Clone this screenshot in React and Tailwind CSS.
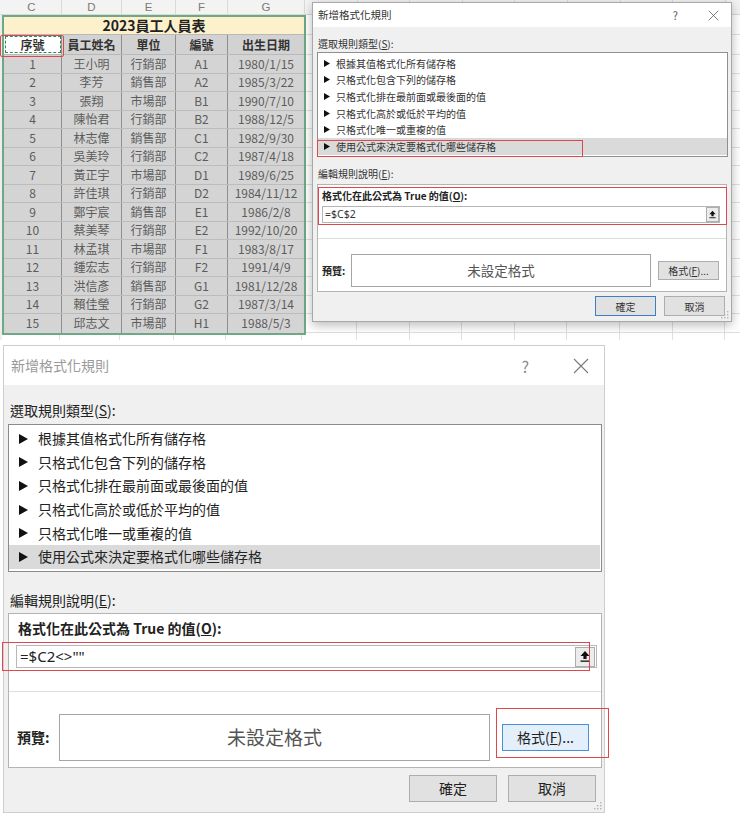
import React from 'react';

const employees = [
    [1, '王小明', '行銷部', 'A1', '1980/1/15'],
    [2, '李芳', '銷售部', 'A2', '1985/3/22'],
    [3, '張翔', '市場部', 'B1', '1990/7/10'],
    [4, '陳怡君', '行銷部', 'B2', '1988/12/5'],
    [5, '林志偉', '銷售部', 'C1', '1982/9/30'],
    [6, '吳美玲', '行銷部', 'C2', '1987/4/18'],
    [7, '黃正宇', '市場部', 'D1', '1989/6/25'],
    [8, '許佳琪', '行銷部', 'D2', '1984/11/12'],
    [9, '鄭宇宸', '銷售部', 'E1', '1986/2/8'],
    [10, '蔡美琴', '行銷部', 'E2', '1992/10/20'],
    [11, '林孟琪', '市場部', 'F1', '1983/8/17'],
    [12, '鍾宏志', '行銷部', 'F2', '1991/4/9'],
    [13, '洪信彥', '銷售部', 'G1', '1981/12/28'],
    [14, '賴佳瑩', '行銷部', 'G2', '1987/3/14'],
    [15, '邱志文', '市場部', 'H1', '1988/5/3'],
];

const cellWidths = ['w-[58px]', 'w-[60px]', 'w-[54px]', 'w-[52px]', 'w-[76px]'];
const letterWidths = ['w-[60px]', 'w-[60px]', 'w-[54px]', 'w-[52px]', 'w-[77px]'];
const headers = ['序號', '員工姓名', '單位', '編號', '出生日期'];
const rules = [
    '根據其值格式化所有儲存格',
    '只格式化包含下列的儲存格',
    '只格式化排在最前面或最後面的值',
    '只格式化高於或低於平均的值',
    '只格式化唯一或重複的值',
    '使用公式來決定要格式化哪些儲存格',
];
const blankCols = Array.from({ length: 9 });
const rightRowHeights = ['h-[20px]', 'h-[20px]', ...Array.from({ length: 16 }, () => 'h-[18.5px]')];

function Tri({ small }) {
    return small ? (
        <svg width="6" height="7" viewBox="0 0 6 7" className="shrink-0"><path d="M0 0 L6 3.5 L0 7 Z" fill="#111" /></svg>
    ) : (
        <svg width="9" height="10" viewBox="0 0 9 10" className="shrink-0"><path d="M0 0 L9 5 L0 10 Z" fill="#111" /></svg>
    );
}

function XIcon({ size, color }) {
    return (
        <svg width={size} height={size} viewBox="0 0 16 16">
            <path d="M1 1 L15 15 M15 1 L1 15" stroke={color} strokeWidth="1.1" fill="none" />
        </svg>
    );
}

function UploadIcon({ w, h }) {
    return (
        <svg width={w} height={h} viewBox="0 0 10 12">
            <path d="M5 0.5 L9.5 5.5 H6.6 V8.6 H3.4 V5.5 H0.5 Z" fill="#111" />
            <rect x="0.5" y="10" width="9" height="1.3" fill="#111" />
        </svg>
    );
}

function Grip() {
    return (
        <svg width="9" height="9" viewBox="0 0 9 9" className="absolute bottom-[2px] right-[2px]">
            <g fill="#b5b5b5">
                <rect x="7" y="1" width="1.4" height="1.4" />
                <rect x="4" y="4" width="1.4" height="1.4" />
                <rect x="7" y="4" width="1.4" height="1.4" />
                <rect x="1" y="7" width="1.4" height="1.4" />
                <rect x="4" y="7" width="1.4" height="1.4" />
                <rect x="7" y="7" width="1.4" height="1.4" />
            </g>
        </svg>
    );
}

function Sheet() {
    return (
        <div className="relative h-[340px] overflow-hidden bg-white">
            {/* column letters */}
            <div className="flex h-[15px] border-b border-[#d8d8d8] bg-[#f3f3f3] font-['Liberation_Sans',sans-serif] text-[11.5px] leading-[14px] text-[#7a7a7a]">
                <div className="w-[2px] shrink-0" />
                {['C', 'D', 'E', 'F', 'G'].map((c, i) => (
                    <div key={c} className={`${letterWidths[i]} shrink-0 border-r border-[#dadada] text-center`}>{c}</div>
                ))}
                {blankCols.map((_, i) => (
                    <div key={i} className="w-[52.6px] shrink-0 border-r border-[#dadada]" />
                ))}
            </div>

            <div className="flex">
                <div className="h-[330px] w-[2px] shrink-0 bg-[#eeeeee]" />
                <div className="w-[304px] shrink-0">
                    <div className="border-2 border-[#6ea886]">
                        <div className="flex h-[18px] items-center justify-center border-b border-[#b9b9b9] bg-[#fdf1cc] text-[14px] font-bold text-[#222]">
                            2023員工人員表
                        </div>
                        <div className="flex h-[20px] border-b border-[#b9b9b9] text-[12px] font-bold text-[#333]">
                            {headers.map((h, i) => (
                                <div
                                    key={h}
                                    className={`${cellWidths[i]} flex shrink-0 items-center justify-center ${i < 4 ? 'border-r border-r-[#8f8f8f]' : ''} ${i === 0 ? 'bg-white outline-1 -outline-offset-2 outline-dashed outline-[#2e8b57]' : 'bg-[#d2d2d2]'}`}
                                >
                                    {h}
                                </div>
                            ))}
                        </div>
                        {employees.map((row, r) => (
                            <div key={row[0]} className={`flex h-[18.5px] text-[12px] text-[#5c5c5c] ${r < 14 ? 'border-b border-[#bcbcbc]' : ''}`}>
                                {row.map((v, i) => (
                                    <div
                                        key={i}
                                        className={`${cellWidths[i]} flex shrink-0 items-center justify-center bg-[#d4d4d4] ${i < 4 ? 'border-r border-r-[#8f8f8f]' : ''}`}
                                    >
                                        {v}
                                    </div>
                                ))}
                            </div>
                        ))}
                    </div>
                    <div className="flex h-[18.5px]">
                        {cellWidths.map((w, i) => (
                            <div key={i} className={`${w} shrink-0 border-r border-b border-[#e0e0e0]`} />
                        ))}
                    </div>
                </div>
                <div className="flex-1">
                    {rightRowHeights.map((h, r) => (
                        <div key={r} className={`flex ${h}`}>
                            {blankCols.map((_, i) => (
                                <div key={i} className={`${i === 0 ? 'w-[51px]' : 'w-[52.6px]'} shrink-0 border-r border-b border-[#e0e0e0]`} />
                            ))}
                        </div>
                    ))}
                </div>
            </div>

            {/* copied cell highlight */}
            <div className="absolute left-0 top-[35px] h-[22px] w-[64px] rounded-[2px] border-[1.5px] border-[#e0474c]" />

            <SmallDialog />
        </div>
    );
}

function SmallDialog() {
    return (
        <div className="absolute left-[312px] top-[2px] h-[320px] w-[420px] border border-[#a8a8a8] bg-[#f0f0f0] text-[10px] text-[#333] shadow-[0_3px_10px_rgba(0,0,0,0.28)]">
            <div className="flex h-[24px] items-center justify-between bg-white pl-[5px] pr-[12px]">
                <span className="text-[10.5px] text-[#333]">新增格式化規則</span>
                <div className="flex items-center gap-[30px]">
                    <span className="text-[11px] text-[#555]">?</span>
                    <XIcon size={11} color="#555" />
                </div>
            </div>
            <div className="px-[4px]">
                <div className="pl-[1px] pt-[10px] leading-[14px]">選取規則類型(<span className="underline">S</span>):</div>
                <div className="mt-[1px] h-[105px] w-[411px] border border-[#8f8f8f] bg-white pt-[2px]">
                    {rules.map((r, i) => (
                        <div key={r} className={`flex h-[16.6px] items-center gap-[6px] pl-[6px] ${i === 5 ? 'bg-[#dadada]' : ''}`}>
                            <Tri small />
                            <span>{r}</span>
                        </div>
                    ))}
                </div>
                <div className="mt-[10px] pl-[1px] leading-[14px]">編輯規則說明(<span className="underline">E</span>):</div>
                <div className="mt-[3px] h-[108px] w-[410px] border border-[#b4b4b4] bg-white">
                    <div className="pl-[4px] pt-[4px] font-bold leading-[14px] text-[#222]">格式化在此公式為 True 的值(<span className="underline">O</span>):</div>
                    <div className="ml-[4px] mt-[3px] flex h-[17px] w-[398px] items-center justify-between border border-[#b5b5b5] bg-white pl-[2px] font-['Noto_Sans',sans-serif] text-[10.5px]">
                        <span>=$C$2</span>
                        <div className="flex h-[15px] w-[13px] items-center justify-center border border-[#adadad] bg-[#ececec]">
                            <UploadIcon w={7} h={9} />
                        </div>
                    </div>
                    <div className="mt-[15px] border-t border-[#dedede]" />
                    <div className="mt-[15px] flex items-center">
                        <div className="w-[33px] shrink-0 pl-[4px] font-bold text-[#222]">預覽:</div>
                        <div className="flex h-[33px] w-[300px] shrink-0 items-center justify-center border border-[#a5a5a5] text-[13.5px] text-[#555]">未設定格式</div>
                        <div className="ml-[7px] flex h-[19px] w-[61px] items-center justify-center border border-[#adadad] bg-[#e1e1e1] text-[10px]">
                            格式(<span className="underline">F</span>)...
                        </div>
                    </div>
                </div>
                <div className="mt-[4px] flex justify-end gap-[8px] pr-[2px]">
                    <div className="flex h-[20px] w-[61px] items-center justify-center border border-[#3d7fc1] bg-[#e1e1e1]">確定</div>
                    <div className="flex h-[20px] w-[61px] items-center justify-center border border-[#adadad] bg-[#e1e1e1]">取消</div>
                </div>
            </div>
            <Grip />

            <div className="absolute left-[4px] top-[137px] h-[17px] w-[266px] border border-[#e0474c]" />
            <div className="absolute left-[5px] top-[184px] h-[38px] w-[409px] border-[1.5px] border-[#e0474c]" />
        </div>
    );
}

function BigDialog() {
    return (
        <div className="relative ml-[3px] mt-[5px] h-[468px] w-[602px] border border-[#cdcdcd] bg-[#f0f0f0] text-[14px] text-[#222]">
            <div className="flex h-[39px] items-center justify-between bg-white pl-[7px] pr-[15px]">
                <span className="text-[14px] text-[#9a9a9a]">新增格式化規則</span>
                <div className="flex items-center gap-[44px]">
                    <span className="text-[16px] text-[#8a8a8a]">?</span>
                    <XIcon size={16} color="#7a7a7a" />
                </div>
            </div>
            <div className="px-[4px]">
                <div className="pl-[2px] pt-[15px] leading-[20px]">選取規則類型(<span className="underline">S</span>):</div>
                <div className="mt-[4px] h-[148px] w-[594px] border border-[#8a8a8a] bg-white pt-[2px]">
                    {rules.map((r, i) => (
                        <div key={r} className={`flex h-[23.6px] items-center gap-[10px] pl-[10px] ${i === 5 ? 'mr-[1px] bg-[#dadada]' : ''}`}>
                            <Tri />
                            <span>{r}</span>
                        </div>
                    ))}
                </div>
                <div className="mt-[18px] pl-[2px] leading-[20px]">編輯規則說明(<span className="underline">E</span>):</div>
                <div className="mt-[3px] h-[155px] w-[594px] border border-[#b4b4b4] bg-white">
                    <div className="pl-[9px] pt-[4px] font-bold leading-[20px]">格式化在此公式為 True 的值(<span className="underline">O</span>):</div>
                    <div className="ml-[7px] mt-[7px] flex h-[23px] w-[581px] items-center justify-between border border-[#b8b8b8] bg-white pl-[3px] pr-[1px] font-['Noto_Sans',sans-serif] text-[15px]">
                        <span>=$C2&lt;&gt;""</span>
                        <div className="flex h-[20px] w-[20px] items-center justify-center border border-[#adadad] bg-[#ececec]">
                            <UploadIcon w={10} h={13} />
                        </div>
                    </div>
                    <div className="mt-[23px] border-t border-[#dedede]" />
                    <div className="mt-[22px] flex items-center">
                        <div className="w-[50px] shrink-0 pl-[8px] font-bold">預覽:</div>
                        <div className="flex h-[47px] w-[431px] shrink-0 items-center justify-center border border-[#a5a5a5] text-[19px] text-[#555]">未設定格式</div>
                        <div className="ml-[12px] flex h-[27px] w-[87px] items-center justify-center border border-[#4a90d9] bg-[#e3effa] text-[14px]">
                            格式(<span className="underline">F</span>)...
                        </div>
                    </div>
                </div>
                <div className="mt-[7px] flex justify-end gap-[11px] pr-[4px]">
                    <div className="flex h-[27px] w-[88px] items-center justify-center border border-[#adadad] bg-[#e1e1e1]">確定</div>
                    <div className="flex h-[27px] w-[88px] items-center justify-center border border-[#adadad] bg-[#e1e1e1]">取消</div>
                </div>
            </div>
            <Grip />

            <div className="absolute left-[-2px] top-[296px] h-[29px] w-[588px] border-[1.5px] border-[#e0474c]" />
            <div className="absolute left-[492px] top-[362px] h-[50px] w-[113px] border-[1.5px] border-[#e0474c]" />
        </div>
    );
}

export default function App() {
    return (
        <div className="h-[815px] w-[740px] overflow-hidden bg-white font-['Noto_Sans_CJK_TC',sans-serif]">
            <Sheet />
            <BigDialog />
        </div>
    );
}
